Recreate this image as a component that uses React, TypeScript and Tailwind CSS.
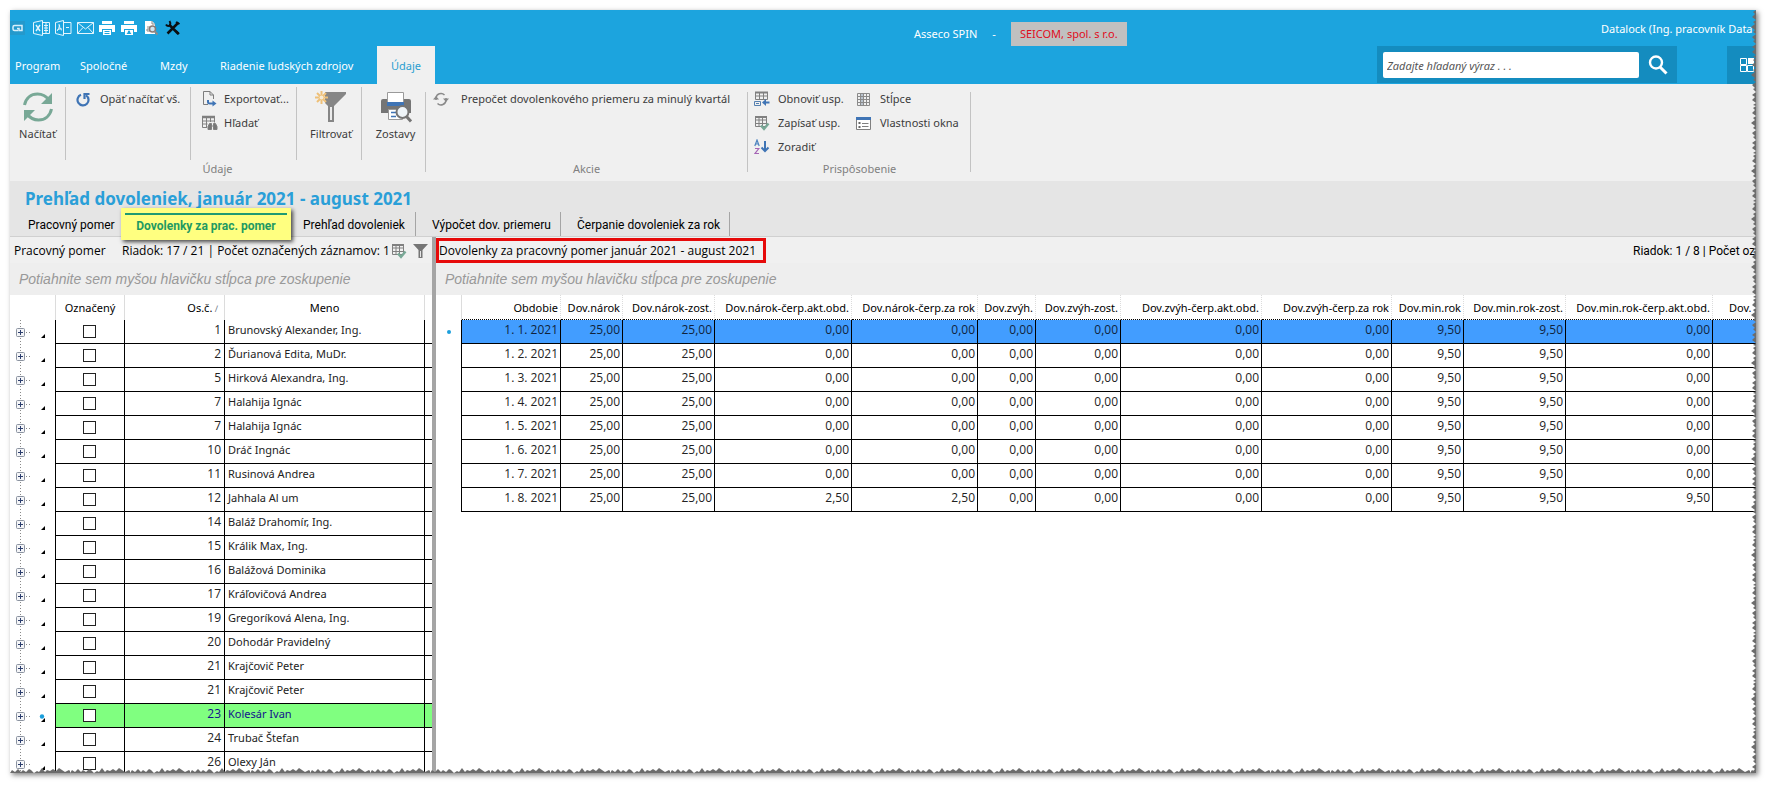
import type { ReactNode } from "react";

type Employee = { no: number; name: string; current?: boolean };

const employees: Employee[] = [
  { no: 1, name: "Brunovský Alexander, Ing." },
  { no: 2, name: "Ďurianová Edita, MuDr." },
  { no: 5, name: "Hirková Alexandra, Ing." },
  { no: 7, name: "Halahija Ignác" },
  { no: 7, name: "Halahija Ignác" },
  { no: 10, name: "Dráč Ingnác" },
  { no: 11, name: "Rusinová Andrea" },
  { no: 12, name: "Jahhala Al um" },
  { no: 14, name: "Baláž Drahomír, Ing." },
  { no: 15, name: "Králik Max, Ing." },
  { no: 16, name: "Balážová Dominika" },
  { no: 17, name: "Kráľovičová Andrea" },
  { no: 19, name: "Gregoríková Alena, Ing." },
  { no: 20, name: "Dohodár Pravidelný" },
  { no: 21, name: "Krajčovič Peter" },
  { no: 21, name: "Krajčovič Peter" },
  { no: 23, name: "Kolesár Ivan", current: true },
  { no: 24, name: "Trubač Štefan" },
  { no: 26, name: "Olexy Ján" },
];

const columns = [
  { title: "Obdobie", width: "w-[99px]" },
  { title: "Dov.nárok", width: "w-[62px]" },
  { title: "Dov.nárok-zost.", width: "w-[92px]" },
  { title: "Dov.nárok-čerp.akt.obd.", width: "w-[137px]" },
  { title: "Dov.nárok-čerp.za rok", width: "w-[126px]" },
  { title: "Dov.zvýh.", width: "w-[58px]" },
  { title: "Dov.zvýh-zost.", width: "w-[85px]" },
  { title: "Dov.zvýh-čerp.akt.obd.", width: "w-[141px]" },
  { title: "Dov.zvýh-čerp.za rok", width: "w-[130px]" },
  { title: "Dov.min.rok", width: "w-[72px]" },
  { title: "Dov.min.rok-zost.", width: "w-[102px]" },
  { title: "Dov.min.rok-čerp.akt.obd.", width: "w-[147px]" },
];

const zeroMonth = ["25,00", "25,00", "0,00", "0,00", "0,00", "0,00", "0,00", "0,00", "9,50", "9,50", "0,00"];
const august = ["25,00", "25,00", "2,50", "2,50", "0,00", "0,00", "0,00", "0,00", "9,50", "9,50", "9,50"];

const months = [1, 2, 3, 4, 5, 6, 7, 8].map((month) => ({
  period: `1. ${month}. 2021`,
  values: month === 8 ? august : zeroMonth,
}));

/* ---------- icons ---------- */

function TitleIcons() {
  const button = "flex size-[22px] items-center justify-center";
  return (
    <div className="flex items-center pt-[7px]">
      <button type="button" aria-label="Menu" className="flex h-[14px] w-[15px] items-center bg-[#2499cc]">
        <svg width="14" height="10" fill="none" stroke="#d8f0fb" strokeWidth="1.500">
          <path d="M8 7.500H4.500Q3 7.500 3 6V4Q3 2.500 4.500 2.500H12V7.500H9V5.500H7" />
        </svg>
      </button>
      <button type="button" aria-label="Excel" className={`${button} ml-[5px]`}>
        <svg width="17" height="16" fill="none" stroke="#e4f5fd">
          <path d="M.5 2.500 9.500.5v15L.5 13.500ZM9.500 2.500h7v11h-7M11 5.500h4M11 8h4M11 10.500h4M13 3v10" />
          <path d="m3 5 4 6M7 5l-4 6" strokeWidth="1.400" />
        </svg>
      </button>
      <button type="button" aria-label="PDF" className={button}>
        <svg width="17" height="16" fill="none" stroke="#e4f5fd">
          <path d="M.5 2.500 8.500.5v15L.5 13.500ZM8.500 2.500h7.500v11H8.500M11 7.500h3" />
          <path d="M4 4c1 3-1 6-2 7M4.500 5c0 3 1 5 2.500 5M2.500 9.500l4-1" />
        </svg>
      </button>
      <button type="button" aria-label="Mail" className={button}>
        <svg width="17" height="14" fill="none" stroke="#e4f5fd">
          <path d="M.5 1.500h16v11H.5ZM.5 1.500l8 6.500 8-6.500M.5 12.500 6 6.500M16.500 12.500 11 6.500" />
        </svg>
      </button>
      <button type="button" aria-label="Tlač" className={button}>
        <svg width="16" height="16" fill="#fff">
          <path d="M3 1h10v3H3ZM0 5h16v7h-3V9H3v3H0ZM4 10h8v5H4Z" />
          <path d="M5.500 11.500h5M5.500 13.500h5" stroke="#1ca4de" />
        </svg>
      </button>
      <button type="button" aria-label="Tlač osoby" className={button}>
        <svg width="16" height="16" fill="#fff">
          <path d="M3 1h10v3H3ZM0 5h16v7h-3V9H3v3H0ZM4 10h8v5H4Z" />
          <path d="M8 10.500a1 1 0 0 1 1 1.500l1.500 2h-5L7 12a1 1 0 0 1 1-1.500Z" fill="#1ca4de" />
        </svg>
      </button>
      <button type="button" aria-label="Náhľad" className={button}>
        <svg width="14" height="16" fill="none">
          <path d="M1 1h7l3 3v10H1Z" fill="#fff" />
          <path d="M3 7h4v2H3v2h3M8 1v3h3" stroke="#8a8a8a" />
          <circle cx="8.500" cy="9" r="3" stroke="#8a7a74" strokeWidth="1.500" fill="#cfe6f2" />
          <path d="m10.500 11 3 3.500" stroke="#8a8a8a" strokeWidth="2" />
        </svg>
      </button>
      <button type="button" aria-label="Nastavenia" className={button}>
        <svg width="16" height="16" fill="none" stroke="#0b0f12" strokeWidth="2.500">
          <path d="M4 4.500 13.500 14M2.500 13.500l11-11" />
          <path d="M1 4.500Q2.500 7 5 5.500 6 3 4.500 1M11 2l3.500 2M11 11l3 3" strokeWidth="2" />
        </svg>
      </button>
    </div>
  );
}

const ReloadIcon = () => (
  <svg width="32" height="32" fill="none" stroke="#78a896" strokeWidth="3">
    <path d="M2.500 14C4 7 9 3 15.500 3c5 0 8.500 2 11.500 6M29.500 18C28 25 23 29 16.500 29 11 29 8 27 5 23" />
    <path d="M30 2v11H19ZM2 30V19h11Z" fill="#78a896" stroke="none" />
  </svg>
);

const UndoIcon = () => (
  <svg width="15" height="15" fill="none" stroke="#3f74b5" strokeWidth="2.200">
    <path d="M5 2.800A5.500 5.500 0 1 0 10 3.300" />
    <path d="M13.500 2H8.500V7" />
  </svg>
);

const ExportIcon = () => (
  <svg width="15" height="16" fill="none">
    <path d="M6 13.500H1.500V.5H8L11.500 4v4M8 .5V4h3.500" stroke="#7d7d7d" />
    <path d="M6 9v2q0 1.500 2 1.500h4" stroke="#3f74b5" strokeWidth="2" />
    <path d="m10.500 9.500 4 3-4 3Z" fill="#3f74b5" />
  </svg>
);

const GridSearchIcon = () => (
  <svg width="16" height="16" fill="none" stroke="#808080">
    <path d="M.5 2.500h12v5M.5 2.500v10H5M.5 6h12M.5 9h5M4.500 3v9M8.500 3v4" />
    <path d="M0 2h13" strokeWidth="2.500" />
    <path d="M6 14.500v-3L7.500 8.500h2v6ZM15 14.500v-3l-1.500-3h-2v6ZM9.500 11h2" fill="#777" />
  </svg>
);

const FilterNewIcon = () => (
  <svg width="32" height="32">
    <path d="M10 1h21v2L19 15v16h-6V15l-3-3Z" fill="#868686" />
    <path d="M15 16h2v13h-2Z" fill="#ececec" />
    <g stroke="#eec078" strokeWidth="2">
      <path d="M6.500 0v13M0 6.500h13M2 2l9 9M11 2l-9 9" />
    </g>
    <circle cx="6.500" cy="6.500" r="2" fill="#f6ead4" />
  </svg>
);

const ReportsIcon = () => (
  <svg width="32" height="32">
    <path d="M1 10q0-2 2-2h26q2 0 2 2v12H1Z" fill="#757575" />
    <path d="M7.500 1.500h16V13h-16Z" fill="#fff" stroke="#9a9a9a" />
    <path d="M7 11h17v4H7Z" fill="#3f74b5" />
    <path d="M8.500 18.500h14v10h-14Z" fill="#fff" stroke="#9a9a9a" />
    <path d="M11 21.500h5M11 25.500h5" stroke="#3f74b5" strokeWidth="1.500" />
    <circle cx="22.500" cy="21" r="6" fill="#eef4f8" stroke="#757575" strokeWidth="2" />
    <path d="m26.500 25.500 4.500 5" stroke="#757575" strokeWidth="3" />
  </svg>
);

const RecalcIcon = () => (
  <svg width="16" height="16" fill="none" stroke="#8a8a8a" strokeWidth="1.500">
    <path d="M3 9V7a5 5 0 0 1 8.500-3M13 7v2a5 5 0 0 1-8.500 3.500" />
    <path d="m0 8.500 3-3.500 3 3.500ZM10 7.500l3 3.500 3-3.500Z" fill="#8a8a8a" stroke="none" />
  </svg>
);

const RestoreIcon = () => (
  <svg width="16" height="16" fill="none">
    <path d="M1.500 1.500h12v7h-12ZM1.500 5h12M5.500 2v6M9.500 2v6" stroke="#808080" />
    <path d="M1 1.500h13" stroke="#808080" strokeWidth="2" />
    <path d="M.5 10.500h6v4h-6ZM2 12.500h3" stroke="#5580b0" />
    <path d="M15.500 11.500h-5" stroke="#3f74b5" strokeWidth="2" />
    <path d="m8 11.500 4-3.500v7Z" fill="#3f74b5" />
  </svg>
);

const SaveLayoutIcon = () => (
  <svg width="16" height="16" fill="none" className="shrink-0">
    <path d="M1.500 1.500h11v10h-11ZM1.500 5h11M1.500 8.500h11M5 2v9.500M8.500 2v9.500" stroke="#808080" />
    <path d="M1 2h12" stroke="#808080" strokeWidth="2" />
    <path d="m7 10.500 3 3.500 4.500-5.500" stroke="#78a896" strokeWidth="2.400" />
  </svg>
);

const SortIcon = () => (
  <svg width="16" height="16" fill="none">
    <path d="M.8 7 3 1l2.200 6M1.600 5h2.800" stroke="#4c83bf" strokeWidth="1.200" />
    <path d="M1 9.500h3.800L1 14.500h4" stroke="#a565b5" strokeWidth="1.200" />
    <path d="M11 2v10M7.500 8.500 11 12l3.500-3.500" stroke="#3f74b5" strokeWidth="2" />
  </svg>
);

const ColumnsIcon = () => (
  <svg width="15" height="15" fill="none" stroke="#8a8a8a">
    <path d="M4 1h4v13H4Z" fill="#b9c3ce" stroke="none" />
    <path d="M1.500 1.500h12v12h-12ZM4.500 1.500v12M7.500 1.500v12M10.500 1.500v12M1.500 4.500h12M1.500 7.500h12M1.500 10.500h12" />
  </svg>
);

const PropertiesIcon = () => (
  <svg width="15" height="15" fill="none">
    <path d="M.5 1.500h14v12H.5Z" fill="#fff" stroke="#808080" />
    <path d="M0 2.500h15" stroke="#3f74b5" strokeWidth="3" />
    <path d="M6 7.500h6.500M6 10.500h6.500" stroke="#808080" />
    <path d="M2.500 6h2v2h-2ZM2.500 10h2v2h-2Z" fill="#666" />
  </svg>
);

/* ---------- ribbon ---------- */

function RibbonButton({ icon, label, gap = "gap-2" }: { icon: ReactNode; label: string; gap?: string }) {
  return (
    <button type="button" className={`flex h-6 items-center whitespace-nowrap ${gap}`}>
      <span className="w-4 shrink-0">{icon}</span>
      {label}
    </button>
  );
}

function LargeButton({ icon, label }: { icon: ReactNode; label: string }) {
  return (
    <button type="button" className="flex w-full flex-col items-center gap-[3px] pt-1 leading-4">
      {icon}
      {label}
    </button>
  );
}

function Ribbon() {
  const cell = "h-[73px] border-r border-[#c3c3c3]";
  const groupLabel = "mt-auto text-center leading-4 text-[#808080]";
  return (
    <div className="flex h-[97px] shrink-0 bg-[#f0f0f0] pt-[3px] text-[11px] text-[#3c3c3c]">
      <section aria-label="Údaje" className="flex h-[90px] w-[415px] flex-col">
        <div className="flex">
          <div className={`${cell} w-[56px]`}>
            <LargeButton icon={<ReloadIcon />} label="Načítať" />
          </div>
          <div className={`${cell} w-[125px] pl-[10px]`}>
            <RibbonButton icon={<UndoIcon />} label="Opäť načítať vš." />
          </div>
          <div className={`${cell} w-[106px] pl-[11px]`}>
            <RibbonButton icon={<ExportIcon />} label="Exportovať..." gap="gap-1.5" />
            <RibbonButton icon={<GridSearchIcon />} label="Hľadať" gap="gap-1.5" />
          </div>
          <div className={`${cell} w-[65px] pl-1`}>
            <LargeButton icon={<FilterNewIcon />} label="Filtrovať" />
          </div>
          <div className="w-[63px] pl-1">
            <LargeButton icon={<ReportsIcon />} label="Zostavy" />
          </div>
        </div>
        <p className={groupLabel}>Údaje</p>
      </section>
      <section aria-label="Akcie" className="flex h-[90px] w-[323px] flex-col">
        <div className="mt-[5px] -mb-4 flex h-[80px] border-x border-[#c3c3c3] pl-[7px]">
          <div className="-mt-[5px]">
            <RibbonButton
              icon={<RecalcIcon />}
              label="Prepočet dovolenkového priemeru za minulý kvartál"
              gap="gap-3"
            />
          </div>
        </div>
        <p className={groupLabel}>Akcie</p>
      </section>
      <section aria-label="Prispôsobenie" className="flex h-[90px] w-[223px] flex-col">
        <div className="mt-[5px] -mb-4 flex h-[80px] border-r border-[#c3c3c3] pl-[6px]">
          <div className="-mt-[5px] w-[102px]">
            <RibbonButton icon={<RestoreIcon />} label="Obnoviť usp." />
            <RibbonButton icon={<SaveLayoutIcon />} label="Zapísať usp." />
            <RibbonButton icon={<SortIcon />} label="Zoradiť" />
          </div>
          <div className="-mt-[5px]">
            <RibbonButton icon={<ColumnsIcon />} label="Stĺpce" />
            <RibbonButton icon={<PropertiesIcon />} label="Vlastnosti okna" />
          </div>
        </div>
        <p className={groupLabel}>Prispôsobenie</p>
      </section>
    </div>
  );
}

/* ---------- header ---------- */

function Header() {
  return (
    <header className="flex h-[74px] shrink-0 flex-col bg-[#1ca4de] text-[11px] text-white">
      <div className="flex h-9">
        <div className="w-[904px]">
          <TitleIcons />
        </div>
        <div className="flex items-center pt-3">
          <span>Asseco SPIN</span>
          <span className="px-[15px]">-</span>
          <span className="flex h-6 items-center bg-[#c0c0c0] px-[9px] text-[#e00c1c]">SEICOM, spol. s r.o.</span>
        </div>
        <div className="ml-auto w-[155px] pt-[11px] whitespace-nowrap">Datalock (Ing. pracovník Data</div>
      </div>
      <div className="flex h-[38px]">
        <nav className="flex">
          <button type="button" className="w-[60px] pt-[2px] pl-[5px] text-left">Program</button>
          <button type="button" className="w-[80px] pt-[2px] pl-[10px] text-left">Spoločné</button>
          <button type="button" className="w-[60px] pt-[2px] pl-[10px] text-left">Mzdy</button>
          <button type="button" className="w-[167px] pt-[2px] pl-[10px] text-left">Riadenie ľudských zdrojov</button>
          <button type="button" className="w-[58px] bg-[#f0f0f0] pt-[2px] text-[#2a9fd0]">Údaje</button>
        </nav>
        <form className="ml-auto flex h-[37px] w-[300px] items-center bg-[#148cbf] pt-px pl-[6px]">
          <input
            type="search"
            aria-label="Hľadať"
            placeholder="Zadajte hľadaný výraz . . ."
            className="h-[26px] w-[256px] rounded-xs bg-white px-1 text-[11px] text-[#444] italic placeholder:text-[#555]"
          />
          <button type="button" aria-label="Spustiť hľadanie" className="flex flex-1 justify-center">
            <svg width="20" height="20" fill="none" stroke="#fff">
              <circle cx="8" cy="7.500" r="6" strokeWidth="2.400" />
              <path d="m12 12 6.500 6.500" strokeWidth="3" />
            </svg>
          </button>
        </form>
        <button type="button" aria-label="Dlaždice" className="ml-[50px] flex w-[29px] items-center bg-[#148cbf] pl-[13px]">
          <svg width="14" height="14" fill="none" stroke="#fff">
            <path d="M.5.5h6v6h-6ZM.5 7.500h6v6h-6ZM7.500 7.500h6v6h-6Z" />
            <path d="M8 0h6v6H8Z" fill="#fff" stroke="none" />
          </svg>
        </button>
      </div>
    </header>
  );
}

/* ---------- page title and tabs ---------- */

function PageTabs() {
  const tab = "mt-1 h-6 border-r border-[#a5a5a5] pt-[2px] text-left";
  return (
    <div className="h-[56px] shrink-0 border-b border-[#d0d0d0] bg-[#e5e5e5]">
      <h1 className="h-[27px] pt-[6px] pl-[15px] font-['Noto_Sans',sans-serif] text-[17px] leading-6 font-bold text-[#2a9fd8]">
        Prehľad dovoleniek, január 2021 - august 2021
      </h1>
      <div className="flex h-[32px] font-[Roboto,sans-serif] text-[12px] text-black">
        <button type="button" className="mt-1 h-6 w-[111px] pt-[2px] pl-[18px] text-left">Pracovný pomer</button>
        <button
          type="button"
          className="relative z-10 flex h-8 w-[170px] flex-col bg-[#ffff80] px-1 pt-[5px] shadow-[2px_2px_4px_rgba(0,0,0,0.7)]"
        >
          <span className="w-full border-t-2 border-[#1f9a72] pt-[2px] text-center font-bold text-[#1f9a62]">
            Dovolenky za prac. pomer
          </span>
        </button>
        <button type="button" className={`${tab} w-[125px] pl-3`}>Prehľad dovoleniek</button>
        <button type="button" className={`${tab} w-[145px] pl-4`}>Výpočet dov. priemeru</button>
        <button type="button" className={`${tab} w-[169px] pl-4`}>Čerpanie dovoleniek za rok</button>
      </div>
    </div>
  );
}

/* ---------- grids ---------- */

function GroupHint() {
  return (
    <div className="flex h-8 shrink-0 items-center bg-[#eee] pl-[9px] font-['Liberation_Sans',sans-serif] text-[14px] whitespace-nowrap text-[#999] italic">
      Potiahnite sem myšou hlavičku stĺpca pre zoskupenie
    </div>
  );
}

function RowHandle({ current }: { current?: boolean }) {
  return (
    <svg width="45" height="24" className="block">
      <path d="M10.500 0v24M16 12.500h6" stroke="#8a8a8a" strokeDasharray="1 2" />
      <rect x="6.500" y="8.500" width="8" height="8" rx="1" fill="#f4f5f8" stroke="#8b93a0" />
      <path d="M8 12.500h5M10.500 10v5" stroke="#2c3e6e" />
      <path d="M35 18v-4l-4 4Z" fill="#000" />
      {current && <circle cx="32" cy="12.500" r="2.200" fill="#1c9fdc" />}
    </svg>
  );
}

const headCell = "h-[25px] border-r border-[#dcdcdc] bg-white px-0 pt-[2px] pb-0 font-normal whitespace-nowrap";
const bodyCell = "h-6 border-r border-b border-black py-0 pb-1 leading-4 whitespace-nowrap";
const numberCell = "font-['Open_Sans',sans-serif] text-[12px] text-right";

function EmployeeGrid() {
  return (
    <section className="flex w-[422px] shrink-0 flex-col overflow-hidden">
      <div className="flex h-[26px] shrink-0 items-center bg-[#f0f0f0] pt-px pl-1 font-['Open_Sans',sans-serif] text-[12px] whitespace-nowrap">
        <h2 className="w-[108px]">Pracovný pomer</h2>
        <span className="w-[269px]">Riadok: 17 / 21 | Počet označených záznamov: 1</span>
        <button type="button" aria-label="Uložiť usporiadanie" className="w-[22px]">
          <SaveLayoutIcon />
        </button>
        <button type="button" aria-label="Filter">
          <svg width="15" height="15">
            <path d="M0 1h15L9.500 7v8h-4V7Z" fill="#757575" />
            <path d="M7 8h1v6H7Z" fill="#e5e5e5" />
          </svg>
        </button>
      </div>
      <GroupHint />
      <table className="w-[422px] table-fixed border-separate border-spacing-0 text-[11px]">
        <thead>
          <tr>
            <th className={`${headCell} w-[46px]`} />
            <th className={`${headCell} w-[69px]`}>Označený</th>
            <th className={`${headCell} w-[100px] pr-[6px] text-right`}>
              Os.č.<span className="text-[9px] text-gray-500"> ∕</span>
            </th>
            <th className={`${headCell} w-[200px]`}>Meno</th>
            <th className="bg-white p-0" />
          </tr>
        </thead>
        <tbody>
          {employees.map((employee, idx) => (
            <tr key={idx} className={employee.current ? "bg-[#80ff80] text-[#12128c]" : "bg-white text-[#222]"}>
              <td className="h-6 border-r border-black bg-white p-0">
                <RowHandle current={employee.current} />
              </td>
              <td className="h-6 border-r border-b border-black py-0 pr-[2px]">
                <input
                  type="checkbox"
                  aria-label={`Označiť ${employee.name}`}
                  className="mx-auto block size-[13px] appearance-none border border-[#222] bg-white checked:bg-gray-700"
                />
              </td>
              <td className={`${bodyCell} ${numberCell} pr-[3px]`}>{employee.no}</td>
              <td className={`${bodyCell} pl-[3px]`}>{employee.name}</td>
              <td className="border-b border-black" />
            </tr>
          ))}
        </tbody>
      </table>
    </section>
  );
}

function VacationGrid() {
  return (
    <section className="flex min-w-0 flex-1 flex-col overflow-hidden">
      <div className="flex h-[26px] shrink-0 items-center bg-[#f0f0f0] pt-px font-['Open_Sans',sans-serif] text-[12px] whitespace-nowrap">
        <h2 className="flex h-[25px] w-[330px] items-center border-[3px] border-[#e60a0a]">
          Dovolenky za pracovný pomer január 2021 - august 2021
        </h2>
        <span className="ml-auto w-[123px] font-[Roboto,sans-serif]">Riadok: 1 / 8 | Počet oz</span>
      </div>
      <GroupHint />
      <table className="w-[1340px] table-fixed border-separate border-spacing-0 text-[11px]">
        <thead>
          <tr>
            <th className={`${headCell} w-[26px]`} />
            {columns.map((column) => (
              <th
                key={column.title}
                className={`${headCell} ${column.width} border-b border-b-black border-dotted pr-[2px] text-right`}
              >
                {column.title}
              </th>
            ))}
            <th className={`${headCell} border-b border-b-black border-dotted pl-4 text-left`}>Dov.</th>
          </tr>
        </thead>
        <tbody>
          {months.map((month, idx) => (
            <tr key={month.period} className={idx === 0 ? "bg-[#429dff] text-[#10243c]" : "bg-white text-[#222]"}>
              <td className="border-r border-black bg-white p-0">
                {idx === 0 && <span className="mx-auto block size-1 rounded-full bg-[#1c9fdc]" />}
              </td>
              {[month.period, ...month.values, ""].map((value, col) => (
                <td key={col} className={`${bodyCell} ${numberCell} pr-[2px]`}>
                  {value}
                </td>
              ))}
            </tr>
          ))}
        </tbody>
      </table>
    </section>
  );
}

/* Ragged paper edge along the right and bottom side of the window. */
function TornEdges() {
  return (
    <>
      <svg className="absolute top-0 right-0 z-20 h-full w-[5px]" aria-hidden="true">
        <pattern id="torn-right" width="5" height="48" patternUnits="userSpaceOnUse">
          <path
            d="M5 0 2 2l2 2-3 3 4 3-3 2 2 2-4 3 4 3-2 2 3 2-4 3 3 3-2 1 3 3-4 3 3 2-3 3 4 3-3 2 3 1Z"
            fill="#6c6c6c"
          />
        </pattern>
        <rect width="5" height="100%" fill="url(#torn-right)" />
      </svg>
      <svg className="absolute bottom-0 left-0 z-20 h-[5px] w-full" aria-hidden="true">
        <pattern id="torn-bottom" width="60" height="5" patternUnits="userSpaceOnUse">
          <path
            d="M0 5 2 2l3 2 3-3 3 3 2-2 3 2 3-3 2 1 3 3 3-2 2 1 3-4 3 4 2-2 3 1 3-2 3 2 3-3 3 2 3 2 4-2 3 3Z"
            fill="#6c6c6c"
          />
        </pattern>
        <rect width="100%" height="5" fill="url(#torn-bottom)" />
      </svg>
    </>
  );
}

export default function App() {
  return (
    <div className="h-screen bg-white pt-[10px] pr-[17px] pb-[17px] pl-[10px] font-['Noto_Sans','Open_Sans',sans-serif]">
      <div className="relative flex h-full flex-col overflow-hidden bg-white shadow-[2px_2px_5px_rgba(0,0,0,0.5)]">
        <Header />
        <Ribbon />
        <PageTabs />
        <main className="flex min-h-0 flex-1">
          <EmployeeGrid />
          <div className="w-1 shrink-0 bg-[#a5a5a5]" />
          <VacationGrid />
        </main>
        <TornEdges />
      </div>
    </div>
  );
}
